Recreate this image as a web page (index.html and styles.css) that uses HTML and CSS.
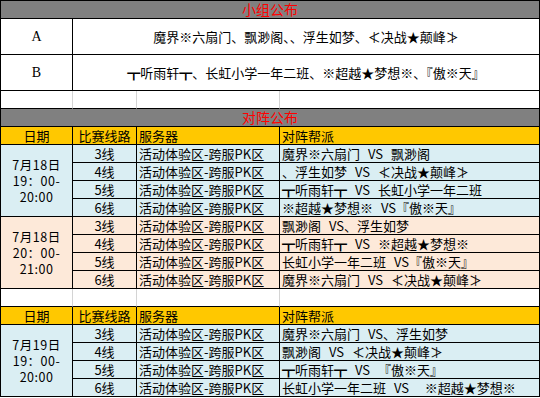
FILE: index.html
```html
<!DOCTYPE html>
<html lang="zh">
<head>
<meta charset="utf-8">
<link rel="stylesheet" href="styles.css">
</head>
<body>
<table class="sheet">
  <colgroup>
    <col class="c1"><col class="c2"><col class="c3"><col class="c4">
  </colgroup>
  <tr class="r-title"><td colspan="4" class="title">小组公布</td></tr>
  <tr class="r-group"><td class="center latin">A</td><td colspan="3" class="center">魔界※六扇门、飘渺阁、、浮生如梦、≮决战★颠峰≯</td></tr>
  <tr class="r-group b"><td class="center latin">B</td><td colspan="3" class="center">┳听雨轩┳、长虹小学一年二班、※超越★梦想※、『傲※天』</td></tr>
  <tr class="r-blank"><td class="grid"></td><td class="grid"></td><td class="grid"></td><td></td></tr>
  <tr><td colspan="4" class="title">对阵公布</td></tr>

  <tr class="head"><td class="center">日期</td><td class="center">比赛线路</td><td>服务器</td><td>对阵帮派</td></tr>
  <tr class="blue"><td rowspan="4" class="date"><span class="dl">7月18日</span><span class="dl">19：00-</span><span class="dl">20:00</span></td><td class="center">3线</td><td>活动体验区-跨服PK区</td><td class="pre">魔界※六扇门 VS 飘渺阁</td></tr>
  <tr class="blue"><td class="center">4线</td><td>活动体验区-跨服PK区</td><td class="pre">、浮生如梦 VS ≮决战★颠峰≯</td></tr>
  <tr class="blue"><td class="center">5线</td><td>活动体验区-跨服PK区</td><td class="pre">┳听雨轩┳ VS 长虹小学一年二班</td></tr>
  <tr class="blue"><td class="center">6线</td><td>活动体验区-跨服PK区</td><td class="pre">※超越★梦想※ VS『傲※天』</td></tr>
  <tr class="peach"><td rowspan="4" class="date"><span class="dl">7月18日</span><span class="dl">20：00-</span><span class="dl">21:00</span></td><td class="center">3线</td><td>活动体验区-跨服PK区</td><td class="pre">飘渺阁 VS、浮生如梦</td></tr>
  <tr class="peach"><td class="center">4线</td><td>活动体验区-跨服PK区</td><td class="pre">┳听雨轩┳ VS ※超越★梦想※</td></tr>
  <tr class="peach"><td class="center">5线</td><td>活动体验区-跨服PK区</td><td class="pre">长虹小学一年二班 VS『傲※天』</td></tr>
  <tr class="peach"><td class="center">6线</td><td>活动体验区-跨服PK区</td><td class="pre">魔界※六扇门 VS ≮决战★颠峰≯</td></tr>
  <tr class="r-blank"><td class="grid"></td><td class="grid"></td><td class="grid"></td><td></td></tr>

  <tr class="head"><td class="center">日期</td><td class="center">比赛线路</td><td>服务器</td><td>对阵帮派</td></tr>
  <tr class="blue"><td rowspan="4" class="date"><span class="dl">7月19日</span><span class="dl">19：00-</span><span class="dl">20:00</span></td><td class="center">3线</td><td>活动体验区-跨服PK区</td><td class="pre">魔界※六扇门 VS、浮生如梦</td></tr>
  <tr class="blue"><td class="center">4线</td><td>活动体验区-跨服PK区</td><td class="pre">飘渺阁 VS ≮决战★颠峰≯</td></tr>
  <tr class="blue"><td class="center">5线</td><td>活动体验区-跨服PK区</td><td class="pre">┳听雨轩┳ VS 『傲※天』</td></tr>
  <tr class="blue"><td class="center">6线</td><td>活动体验区-跨服PK区</td><td class="pre">长虹小学一年二班 VS  ※超越★梦想※</td></tr>
</table>
</body>
</html>
```
FILE: styles.css
```css
html, body {
  margin: 0;
  padding: 0;
  background: #ffffff;
}
.sheet {
  table-layout: fixed;
  width: 540px;
  border-collapse: separate;
  border-spacing: 0;
  border-left: 1px solid #000;
  border-top: 1px solid #000;
  font-family: "Noto Sans CJK SC", "Noto Sans", sans-serif;
  font-size: 13px;
  color: #000;
}
.c1 { width: 72px; }
.c2 { width: 64px; }
.c3 { width: 143px; }
.c4 { width: 260px; }
.sheet td {
  box-sizing: border-box;
  height: 18px;
  padding: 0 0 0 2px;
  line-height: 17px;
  border-right: 1px solid #000;
  border-bottom: 1px solid #000;
  white-space: nowrap;
  overflow: hidden;
  vertical-align: middle;
}
.sheet td.title {
  background: #808080;
  color: #ff0000;
  text-align: center;
  font-size: 14px;
  line-height: 17px;
  padding: 0;
  overflow: visible;
}
.sheet .r-group td { height: 36px; }
.sheet td.center { text-align: center; padding: 0; }
.sheet td.latin { font-family: "Liberation Serif", serif; font-size: 14px; }
.sheet td.grid { border-right-color: #d4d4d4; }
.sheet .head td { background: #ffc800; }
.sheet .blue td { background: #daeef3; }
.sheet .peach td { background: #fde9d9; }
.sheet td.date {
  text-align: center;
  padding: 0;
}
.dl {
  display: block;
  height: 16px;
  line-height: 16px;
  font-size: 12.5px;
  letter-spacing: 0.5px;
}
.sheet td.pre {
  white-space: pre;
  word-spacing: 5px;
}
```
